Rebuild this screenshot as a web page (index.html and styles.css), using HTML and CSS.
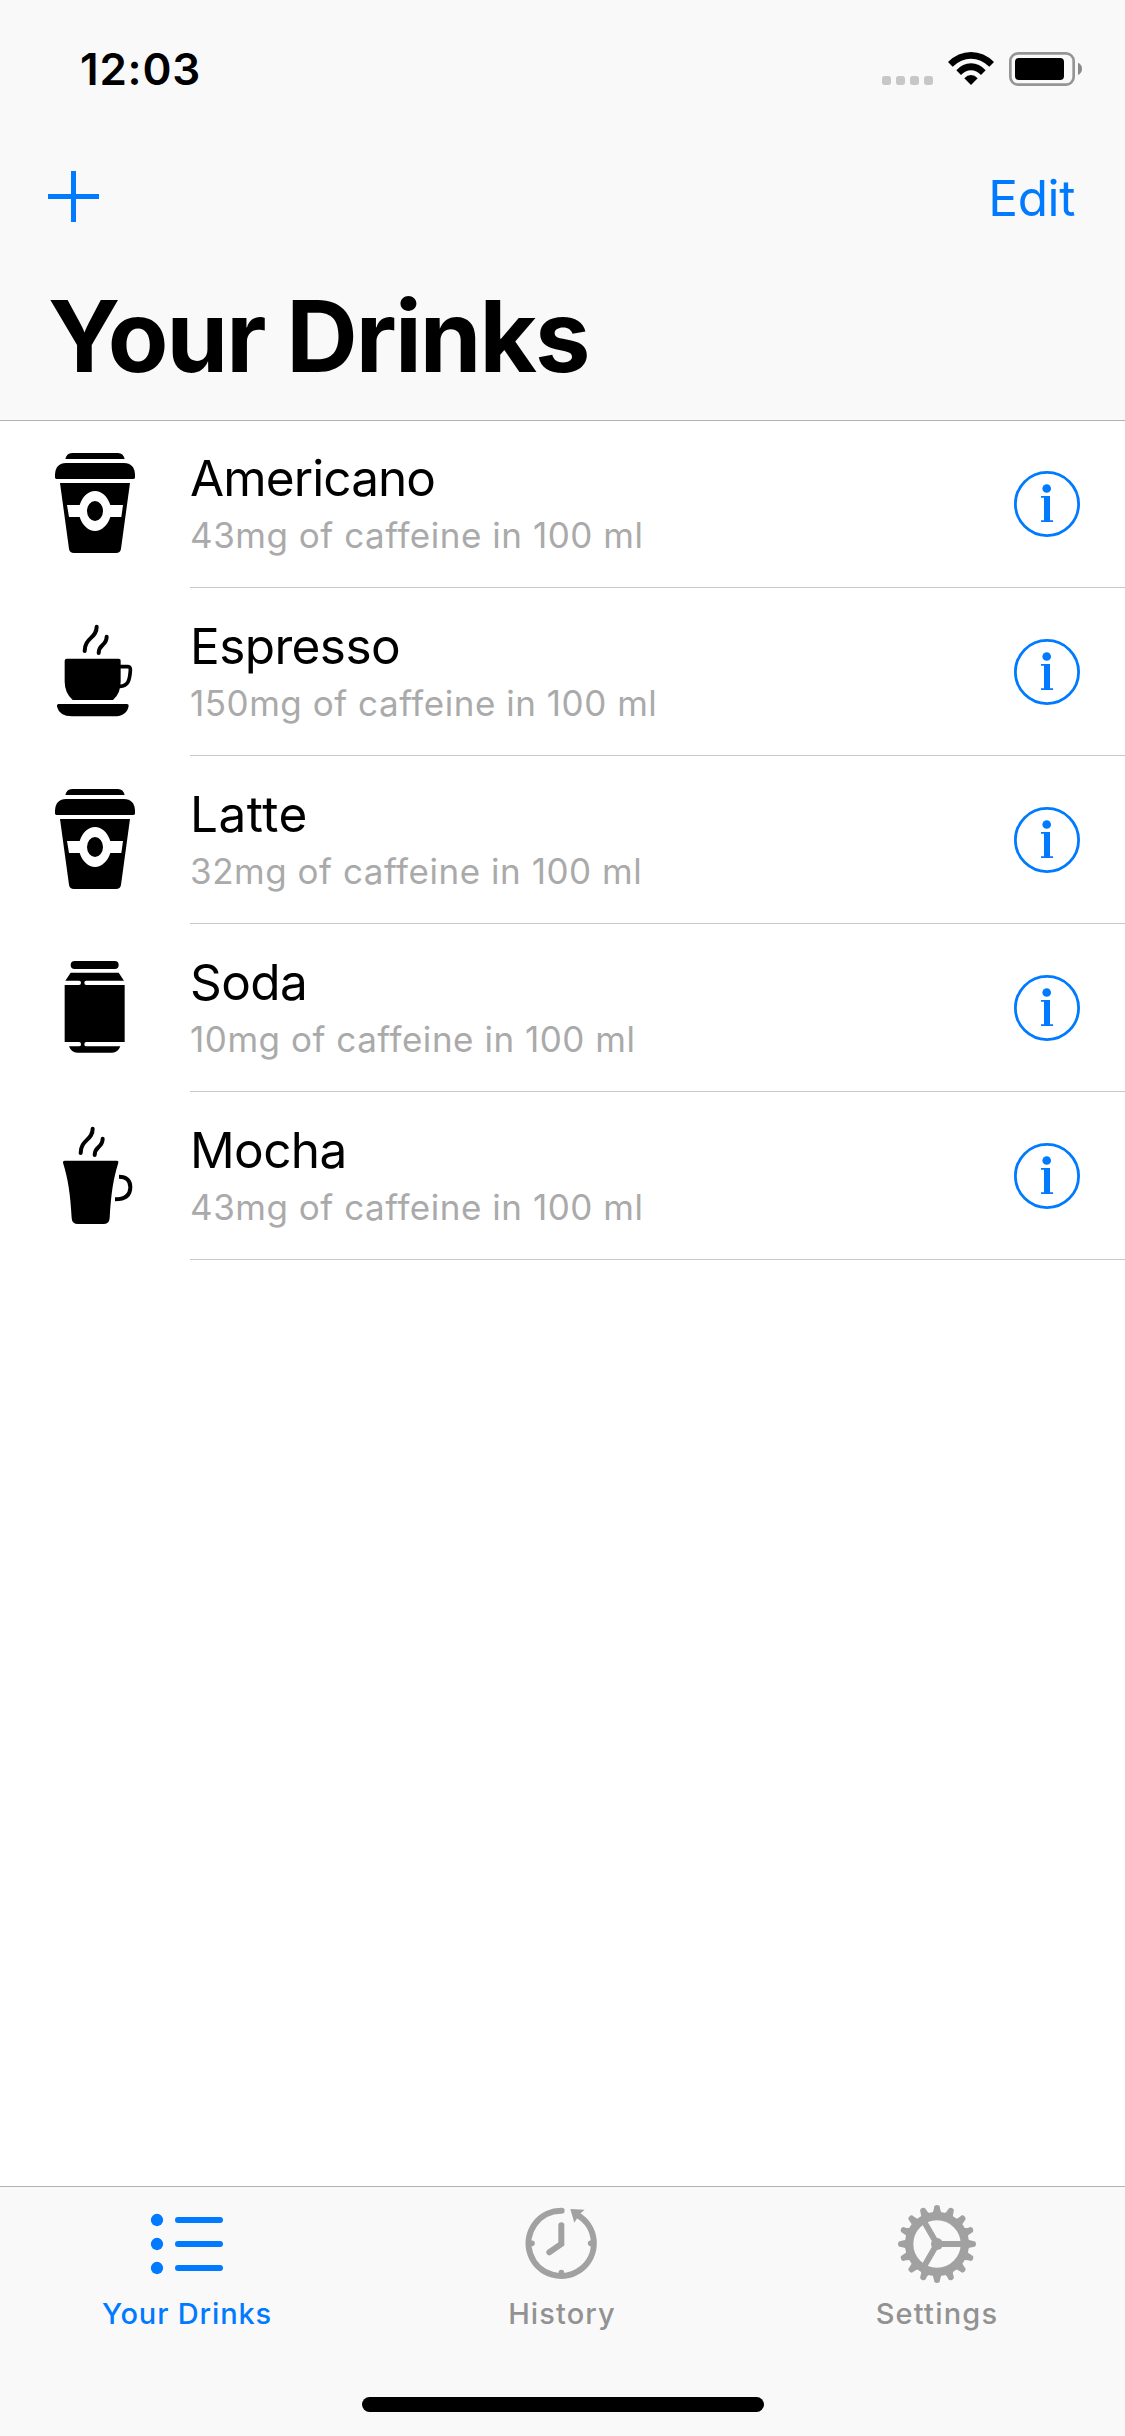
FILE: index.html
```html
<!DOCTYPE html>
<html lang="en">
<head>
<meta charset="utf-8">
<title>Your Drinks</title>
<link rel="stylesheet" href="styles.css">
</head>
<body>
<svg class="defs" aria-hidden="true">
  <symbol id="takeaway" viewBox="30 -30 360 504">
    <path d="M106 87Q110 69 126 69H264Q280 69 284 87Z"/>
    <path d="M75 142V134Q77 99 108 99H282Q313 99 315 134V142Q315 147 310 147H80Q75 147 75 142Z"/>
    <path fill-rule="evenodd" d="M90 159H300L273 356Q271 369 258 369H132Q119 369 117 356ZM111 225L117 261H149C157 286 175 303 195 303S233 286 241 261H274L279 225H241C233 199 215 183 195 183S157 199 149 225Z"/>
    <ellipse cx="195" cy="243" rx="24" ry="30"/>
  </symbol>
  <symbol id="info" viewBox="0 0 66 66">
    <circle cx="33" cy="33" r="31.6" fill="none" stroke="currentColor" stroke-width="2.8"/>
    <circle cx="32.7" cy="17.5" r="4.3"/>
    <path d="M27 25H36V49.3H39V51H27V49.3H30V26.7H27Z"/>
  </symbol>
</svg>

<header class="header">
  <div class="status">
    <time class="clock">12:03</time>
    <svg class="status-icons" viewBox="60 60 612 114">
      <g fill="#c7c7c7">
        <rect x="66" y="138" width="27" height="27" rx="8"/>
        <rect x="108" y="138" width="27" height="27" rx="8"/>
        <rect x="150" y="138" width="27" height="27" rx="8"/>
        <rect x="192" y="138" width="27" height="27" rx="8"/>
      </g>
      <path d="M264 96Q294 66 333 66T402 96L388 110Q363 86 333 86T278 110Z"/>
      <path d="M289 121Q308 100 333 100T377 121L363 135Q350 121 333 121T303 135Z"/>
      <path d="M313 145Q322 135 333 135T353 145L333 165Z"/>
      <rect x="451" y="70" width="190" height="94" rx="23" fill="none" stroke="#959595" stroke-width="8"/>
      <rect x="465" y="84" width="147" height="66" rx="12"/>
      <path fill="#8a8a8a" d="M654 98Q666 103 666 116.500T654 135Z"/>
    </svg>
  </div>
  <nav class="nav">
    <svg class="plus" viewBox="0 0 51 51"><path d="M23 0H28V23H51V28H28V51H23V28H0V23H23Z"/></svg>
    <a class="edit">Edit</a>
  </nav>
  <h1 class="title">Your Drinks</h1>
</header>

<main class="list">
  <article class="row">
    <svg class="drink"><use href="#takeaway"/></svg>
    <div class="cell">
      <div class="text"><h2 class="name name-tight">Americano</h2><p class="detail">43mg of caffeine in 100 ml</p></div>
      <svg class="info"><use href="#info"/></svg>
    </div>
  </article>
  <article class="row">
    <svg class="drink" viewBox="0 -36 360 504">
      <g fill="none" stroke="#000" stroke-width="12" stroke-linecap="round">
        <path d="M170 80C170 116 134 112 134 153M200 110C200 138 176 132 176 159"/>
        <path stroke-width="11" d="M240 200H264Q272 200 271 212C269 242 264 258 240 259"/>
      </g>
      <path d="M80 176H236Q242 176 242 182V245Q242 280 219 300H98Q74 278 74 245V182Q74 176 80 176Z"/>
      <path d="M56 312H261Q266 312 266 317Q262 348 222 349H96Q58 348 51 320Q50 312 56 312Z"/>
    </svg>
    <div class="cell">
      <div class="text"><h2 class="name">Espresso</h2><p class="detail">150mg of caffeine in 100 ml</p></div>
      <svg class="info"><use href="#info"/></svg>
    </div>
  </article>
  <article class="row">
    <svg class="drink"><use href="#takeaway"/></svg>
    <div class="cell">
      <div class="text"><h2 class="name name-wide">Latte</h2><p class="detail">32mg of caffeine in 100 ml</p></div>
      <svg class="info"><use href="#info"/></svg>
    </div>
  </article>
  <article class="row">
    <svg class="drink" viewBox="0 -48 360 504">
      <rect x="92" y="63" width="144" height="24" rx="12"/>
      <path d="M92 98H236L252 122H139Q133 122 133 128.500T139 135H254V306H139Q133 306 133 312.500T139 319H241Q234 338 216 338H112Q94 338 87 319H117Q123 319 123 312.500T117 306H74V135H117Q123 135 123 128.500T117 122H76Z"/>
    </svg>
    <div class="cell">
      <div class="text"><h2 class="name">Soda</h2><p class="detail">10mg of caffeine in 100 ml</p></div>
      <svg class="info"><use href="#info"/></svg>
    </div>
  </article>
  <article class="row">
    <svg class="drink" viewBox="0 -54 360 504">
      <g fill="none" stroke="#000" stroke-width="12" stroke-linecap="round">
        <path d="M158 56C158 92 122 88 122 129M188 86C188 114 164 108 164 135"/>
        <path stroke-linecap="butt" d="M237 200C259 200 271 212 271 231C271 256 256 268 225 268"/>
      </g>
      <path d="M74 152H231Q236 152 235 158C220 206 213 250 209 324Q208 342 190 342H114Q96 342 95 324C91 250 84 206 69 158Q68 152 74 152Z"/>
    </svg>
    <div class="cell">
      <div class="text"><h2 class="name">Mocha</h2><p class="detail">43mg of caffeine in 100 ml</p></div>
      <svg class="info"><use href="#info"/></svg>
    </div>
  </article>
</main>

<footer class="tabbar">
  <div class="tabs">
    <a class="tab tab-active">
      <svg class="tab-icon" viewBox="201 90 243 270">
        <circle cx="231" cy="150" r="18.500"/><circle cx="231" cy="222" r="18.500"/><circle cx="231" cy="294" r="18.500"/>
        <path stroke="currentColor" stroke-width="18" stroke-linecap="round" d="M294 150H420M294 222H420M294 294H420"/>
      </svg>
      <span class="tab-label">Your Drinks</span>
    </a>
    <a class="tab">
      <svg class="tab-icon" viewBox="126 90 243 270">
        <g fill="none" stroke="currentColor" stroke-width="18" stroke-linecap="round">
          <path d="M245 122A98 98 0 1 0 294 136"/>
          <path d="M244 166V222L208 247"/>
          <path d="M155 220H156M332 220H334M244 308V310" stroke-width="17"/>
        </g>
        <path d="M271 117L314 119L302 130L293 142L283 158Z"/>
      </svg>
      <span class="tab-label">History</span>
    </a>
    <a class="tab tab-settings">
      <svg class="tab-icon" viewBox="141 90 243 270">
        <g transform="translate(261 222)">
          <circle r="83.500" fill="none" stroke="currentColor" stroke-width="25"/>
          <circle r="18"/>
          <path fill="none" stroke="currentColor" stroke-width="18" d="M0 0H76M0 0L-38-65.800M0 0L-38 65.800"/>
          <g id="quarter">
            <path d="M-18-88Q-9-97-9-108A9 9 0 0 1 9-108Q9-97 18-88Z"/>
            <path transform="rotate(22.500)" d="M-18-88Q-9-97-9-108A9 9 0 0 1 9-108Q9-97 18-88Z"/>
            <path transform="rotate(45)" d="M-18-88Q-9-97-9-108A9 9 0 0 1 9-108Q9-97 18-88Z"/>
            <path transform="rotate(67.500)" d="M-18-88Q-9-97-9-108A9 9 0 0 1 9-108Q9-97 18-88Z"/>
          </g>
          <use href="#quarter" transform="rotate(90)"/>
          <use href="#quarter" transform="rotate(180)"/>
          <use href="#quarter" transform="rotate(270)"/>
        </g>
      </svg>
      <span class="tab-label">Settings</span>
    </a>
  </div>
  <div class="home-indicator"></div>
</footer>
</body>
</html>
```
FILE: styles.css
```css
* { box-sizing: border-box; margin: 0; padding: 0; }

body {
  display: flex;
  flex-direction: column;
  width: 1125px;
  height: 2436px;
  background: #fff;
  color: #000;
  font-family: Inter, "Liberation Sans", sans-serif;
}

svg { display: block; flex: none; fill: currentColor; }
.defs { display: none; }

.header {
  flex: none;
  height: 420px;
  background: #f9f9f9;
  box-shadow: 0 1px 0 #b2b2b2;
  z-index: 1;
}

.status {
  display: flex;
  align-items: center;
  justify-content: space-between;
  height: 132px;
  padding: 6px 41px 0 80px;
}
.clock { font-size: 44px; font-weight: 600; line-height: 60px; letter-spacing: 0.8px; }
.status-icons { width: 204px; height: 38px; }

.nav {
  display: flex;
  align-items: center;
  justify-content: space-between;
  height: 132px;
  padding: 0 50px 0 48px;
  color: #007aff;
}
.plus { width: 51px; height: 51px; margin-bottom: 3px; }
.edit { font-size: 49.5px; line-height: 60px; letter-spacing: -0.4px; }

.title {
  padding: 12px 48px 0;
  font-size: 99px;
  font-weight: 700;
  line-height: 120px;
  letter-spacing: -1.9px;
}

.list { flex: 1; }
.row { display: flex; height: 168px; }
.drink { width: 120px; height: 168px; margin: 0 30px 0 40px; }
.cell {
  display: flex;
  flex: 1;
  align-items: center;
  justify-content: space-between;
  padding: 1px 45px 0 0;
  border-bottom: 1px solid #c8c8c8;
}
.text { align-self: flex-start; padding-top: 27px; }
.name { font-size: 49.5px; font-weight: 400; line-height: 60px; letter-spacing: -0.6px; }
.name-tight { letter-spacing: -0.9px; }
.name-wide { letter-spacing: 0.5px; }
.detail { color: #aaa; font-size: 35px; line-height: 54px; letter-spacing: 0.53px; }
.info { width: 66px; height: 66px; color: #007aff; }

.tabbar {
  flex: none;
  height: 250px;
  background: #f9f9f9;
  border-top: 1px solid #b2b2b2;
}
.tabs { display: flex; padding-top: 13px; }
.tab {
  display: flex;
  flex: 1;
  flex-direction: column;
  align-items: center;
  color: #929292;
  font-size: 29px;
  font-weight: 500;
  line-height: 47px;
  letter-spacing: 1.1px;
}
.tab-icon { width: 81px; height: 90px; color: #a1a1a1; }
.tab-label { margin-right: 1px; }
.tab-active { color: #007aff; letter-spacing: 0.85px; }
.tab-active .tab-icon { color: #007aff; }
.tab-settings { letter-spacing: 1.2px; }

.home-indicator {
  width: 402px;
  height: 15px;
  margin: 60px 0 0 362px;
  border-radius: 8px;
  background: #000;
}
```
